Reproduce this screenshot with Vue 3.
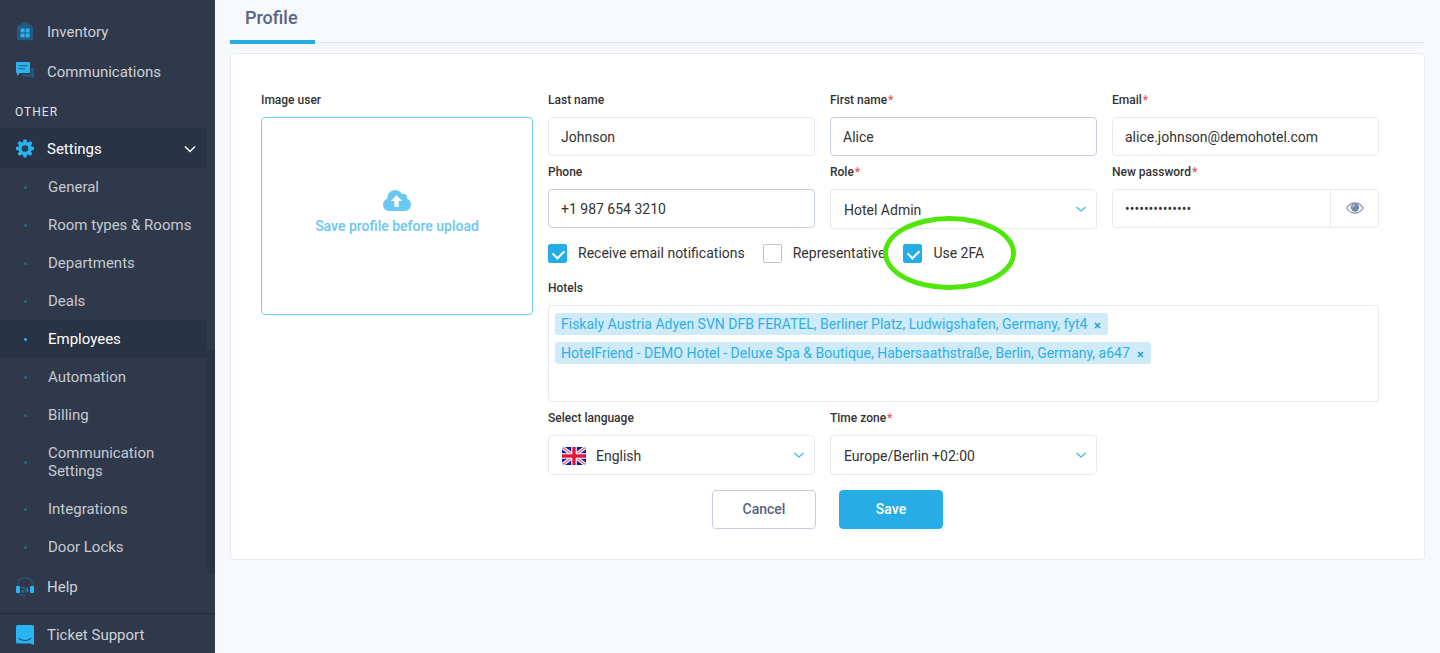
<script setup>
import { ref } from 'vue'

const subItems = [
  'General',
  'Room types & Rooms',
  'Departments',
  'Deals',
  'Employees',
  'Automation',
  'Billing',
  'Communication Settings',
  'Integrations',
  'Door Locks',
]
const current = 'Employees'
const toothAngles = [0, 45, 90, 135]

const lastName = ref('Johnson')
const firstName = ref('Alice')
const email = ref('alice.johnson@demohotel.com')
const phone = ref('+1 987 654 3210')
const password = ref('demo-password1')
const role = ref('Hotel Admin')
const language = ref('English')
const timeZone = ref('Europe/Berlin +02:00')
const notify = ref(true)
const representative = ref(false)
const twoFactor = ref(true)
const showPassword = ref(false)

const hotels = ref([
  'Fiskaly Austria Adyen SVN DFB FERATEL, Berliner Platz, Ludwigshafen, Germany, fyt4',
  'HotelFriend - DEMO Hotel - Deluxe Spa & Boutique, Habersaathstraße, Berlin, Germany, a647',
])
const removeHotel = (index) => hotels.value.splice(index, 1)
</script>

<template>
  <div class="layout">
    <aside class="sidebar">
      <nav class="menu">
        <a href="#" class="item">
          <svg class="icon" viewBox="0 0 20 20" aria-hidden="true">
            <path d="M9.300.300a1.500 1.500 0 0 1 1.400 0l6.500 3.500a1.500 1.500 0 0 1 .8 1.300V17a1.200 1.200 0 0 1-1.200 1.200H3.200A1.200 1.200 0 0 1 2 17V5.100a1.500 1.500 0 0 1 .8-1.300Z" fill="#235b80" />
            <path d="M5.600 6.400h4v4h-4zM10.600 6.400h4v4h-4zM5.600 11.400h4v4h-4zM10.600 11.400h4v4h-4z" fill="#29b3f0" />
          </svg>
          Inventory
        </a>
        <a href="#" class="item">
          <svg class="icon" viewBox="0 0 20 20" aria-hidden="true">
            <path d="M16 6h2.200a.8.800 0 0 1 .8.800V17l-2.500-2.300H8a.8.800 0 0 1-.8-.8v-1.400H16Z" fill="#235b80" />
            <path d="M1.800 0h12.400a.8.800 0 0 1 .8.800v9.400a.8.800 0 0 1-.8.800H5L2 14V11h-.2a.8.800 0 0 1-.8-.8V.800A.8.800 0 0 1 1.800 0Z" fill="#29b3f0" />
            <path d="M3.500 3.700h9M3.500 6.700h6.500" stroke="#1d5b82" stroke-width="1.100" />
          </svg>
          Communications
        </a>
        <h2 class="section">OTHER</h2>
        <a href="#" class="item open">
          <svg class="icon" viewBox="0 0 20 20" aria-hidden="true">
            <circle cx="10" cy="9.500" r="3" fill="#293f56" />
            <circle cx="10" cy="9.500" r="5" fill="none" stroke="#29b3f0" stroke-width="3.400" />
            <path
              v-for="angle in toothAngles"
              :key="angle"
              :transform="`rotate(${angle} 10 9.500)`"
              d="M7.900 3.800 8.500.500h3l.6 3.300zM7.900 15.200l.6 3.300h3l.6-3.300z"
              fill="#29b3f0"
            />
          </svg>
          <span class="grow">Settings</span>
          <svg class="caret" viewBox="0 0 12 8" aria-hidden="true">
            <path d="m1 1.500 5 5 5-5" fill="none" stroke="#fff" stroke-width="1.500" />
          </svg>
        </a>
        <a
          v-for="name in subItems"
          :key="name"
          href="#"
          class="sub"
          :class="{ current: name === current }"
        >
          <span class="dot"></span>
          <span class="sub-name">{{ name }}</span>
        </a>
        <a href="#" class="item lower">
          <svg class="icon" viewBox="0 0 20 20" aria-hidden="true">
            <path d="M2.500 9V8A7.500 7.500 0 0 1 17.500 8v1M3 16c1 2 3.500 2.500 6 2.500" fill="none" stroke="#235b80" stroke-width="1.200" />
            <rect x="1" y="9" width="4" height="7" rx=".8" fill="#29b3f0" />
            <rect x="15" y="9" width="4" height="7" rx=".8" fill="#29b3f0" />
            <circle cx="10" cy="18.300" r="1" fill="#235b80" />
            <path d="M6.500 10.500h2.700v2L6.500 15h3M12.700 15.500v-5l-2.200 3.500h3.500" fill="none" stroke="#2685b5" stroke-width=".9" />
          </svg>
          Help
        </a>
      </nav>
      <div class="scroll-thumb"></div>
      <a href="#" class="item ticket">
        <svg class="icon" viewBox="0 0 20 20" aria-hidden="true">
          <path d="M2.500 0h15A1.500 1.500 0 0 1 19 1.500V20l-3.500-1.500h-13A1.500 1.500 0 0 1 1 17V1.500A1.500 1.500 0 0 1 2.500 0Z" fill="#29b3f0" />
          <path d="M4 13.500c3.500 2.700 8.500 2.700 12 0" fill="none" stroke="#1e577c" stroke-width="1.200" stroke-linecap="round" />
        </svg>
        Ticket Support
      </a>
    </aside>

    <main class="main">
      <div class="tabs">
        <a href="#" class="tab">Profile</a>
      </div>

      <form class="card" @submit.prevent>
        <div class="columns">
          <div class="field">
            <span class="label">Image user</span>
            <button type="button" class="upload">
              <svg class="cloud" viewBox="0 0 28 21" aria-hidden="true">
                <path d="M6.500 21C2.800 21 0 18.200 0 14.700c0-2.800 1.800-5.100 4.200-6C4.200 3.700 7.700 0 12 0c3.100 0 5.800 1.700 7 4.300 3-1.200 5.800 1.200 5 4.400 2.300.700 4 2.900 4 5.800 0 3.700-2.800 6.500-6.300 6.500Z" fill="#6ac7f1" />
                <path d="m13.500 5 5.700 6h-3.500v6h-4.300v-6H8Z" fill="#fff" />
              </svg>
              Save profile before upload
            </button>
          </div>

          <div class="fields">
            <div class="field">
              <label class="label" for="last">Last name</label>
              <input id="last" v-model="lastName" class="control" type="text" />
            </div>
            <div class="field">
              <label class="label" for="first">First name<i>*</i></label>
              <input id="first" v-model="firstName" class="control strong" type="text" />
            </div>
            <div class="field">
              <label class="label" for="email">Email<i>*</i></label>
              <input id="email" v-model="email" class="control" type="email" />
            </div>
            <div class="field">
              <label class="label" for="phone">Phone</label>
              <input id="phone" v-model="phone" class="control strong" type="tel" />
            </div>
            <div class="field">
              <label class="label" for="role">Role<i>*</i></label>
              <div class="select">
                <select id="role" v-model="role" class="control">
                  <option>Hotel Admin</option>
                </select>
                <svg class="arrow" viewBox="0 0 10 6" aria-hidden="true">
                  <path d="m.5 1 4.500 4 4.500-4" fill="none" stroke="#3db4ea" stroke-width="1.300" />
                </svg>
              </div>
            </div>
            <div class="field">
              <label class="label" for="password">New password<i>*</i></label>
              <div class="password">
                <input
                  id="password"
                  v-model="password"
                  class="control"
                  :type="showPassword ? 'text' : 'password'"
                />
                <button
                  type="button"
                  class="eye"
                  aria-label="Show password"
                  @click="showPassword = !showPassword"
                >
                  <svg viewBox="0 0 18 12" aria-hidden="true">
                    <path d="M.7 6C3 2.500 5.800.800 9 .800S15 2.500 17.300 6C15 9.500 12.200 11.200 9 11.200S3 9.500.7 6Z" fill="none" stroke="#8294b3" stroke-width="1.200" />
                    <circle cx="9" cy="5.500" r="4.200" fill="#7388aa" />
                    <path d="M6.700 5.300A2.300 2.300 0 0 1 9 3" fill="none" stroke="#fff" stroke-width=".8" />
                  </svg>
                </button>
              </div>
            </div>

            <div class="checks wide">
              <label class="check"><input v-model="notify" type="checkbox" />Receive email notifications</label>
              <label class="check"><input v-model="representative" type="checkbox" />Representative</label>
              <label class="check">
                <input v-model="twoFactor" type="checkbox" />Use 2FA
                <span class="highlight"></span>
              </label>
            </div>

            <div class="field wide">
              <span class="label">Hotels</span>
              <ul class="tags" aria-label="Hotels">
                <li v-for="(hotel, index) in hotels" :key="hotel" class="tag">
                  {{ hotel }}
                  <button type="button" :aria-label="'Remove ' + hotel" @click="removeHotel(index)">
                    <svg viewBox="0 0 7 7" aria-hidden="true">
                      <path d="m1 1 5 5M6 1 1 6" stroke="#27a3dc" stroke-width="1.700" />
                    </svg>
                  </button>
                </li>
              </ul>
            </div>

            <div class="field">
              <label class="label" for="language">Select language</label>
              <div class="select flagged">
                <select id="language" v-model="language" class="control">
                  <option>English</option>
                </select>
                <svg class="flag" viewBox="0 0 24 18" aria-hidden="true">
                  <clipPath id="flag-shape"><rect width="24" height="18" rx="3" /></clipPath>
                  <g clip-path="url(#flag-shape)">
                    <path d="M0 0h24v18H0z" fill="#0c1c9c" />
                    <path d="m0 0 24 18M24 0 0 18" stroke="#fff" stroke-width="3.600" />
                    <path d="m0 0 24 18M24 0 0 18" stroke="#ee5a76" stroke-width="1.300" />
                    <path d="M12 0v18M0 9h24" stroke="#fff" stroke-width="5.600" />
                    <path d="M12 0v18M0 9h24" stroke="#e3173e" stroke-width="3.400" />
                  </g>
                </svg>
                <svg class="arrow" viewBox="0 0 10 6" aria-hidden="true">
                  <path d="m.5 1 4.500 4 4.500-4" fill="none" stroke="#3db4ea" stroke-width="1.300" />
                </svg>
              </div>
            </div>
            <div class="field">
              <label class="label" for="zone">Time zone<i>*</i></label>
              <div class="select">
                <select id="zone" v-model="timeZone" class="control">
                  <option>Europe/Berlin +02:00</option>
                </select>
                <svg class="arrow" viewBox="0 0 10 6" aria-hidden="true">
                  <path d="m.5 1 4.500 4 4.500-4" fill="none" stroke="#3db4ea" stroke-width="1.300" />
                </svg>
              </div>
            </div>
          </div>
        </div>

        <div class="actions">
          <button type="button" class="btn cancel">Cancel</button>
          <button type="submit" class="btn save">Save</button>
        </div>
      </form>
    </main>
  </div>
</template>

<style>
body {
  background: #f7f8fa;
}
</style>

<style scoped>
.layout,
.layout * {
  box-sizing: border-box;
}
.layout {
  display: flex;
  min-height: 100vh;
  font-family: Roboto, "Liberation Sans", sans-serif;
  font-size: 15px;
  color: #333;
}
.layout button,
.layout input,
.layout select {
  font-family: inherit;
}
a {
  text-decoration: none;
}

.sidebar {
  position: relative;
  display: flex;
  flex-direction: column;
  flex: 0 0 215px;
  background: #2f394b;
}
.menu {
  flex: 1;
  padding: 12px 8px 6px 0;
}
.item {
  display: flex;
  align-items: center;
  height: 40px;
  padding: 0 11px 0 15px;
  color: #ced1d6;
}
.icon {
  flex: none;
  width: 20px;
  height: 20px;
  margin-right: 12px;
}
.open,
.lower,
.ticket {
  padding-top: 2px;
}
.open {
  background: #293346;
  color: #fff;
}
.grow {
  flex: 1;
}
.caret {
  width: 12px;
  height: 8px;
}
.section {
  margin: 0;
  padding: 5px 15px 0;
  font-size: 12px;
  font-weight: 400;
  line-height: 31px;
  letter-spacing: 1px;
  color: #e2e4e8;
}
.sub {
  display: flex;
  align-items: center;
  padding: 10px 12px 10px 24px;
  line-height: 18px;
  color: #c6cad0;
}
.dot {
  flex: none;
  width: 3px;
  height: 3px;
  margin-right: 21px;
  border-radius: 50%;
  background: #23688a;
}
.current {
  background: #293346;
  color: #fff;
}
.current .dot {
  background: #29b3f0;
}
.scroll-thumb {
  position: absolute;
  top: 350px;
  right: 0;
  width: 8px;
  height: 224px;
  border-radius: 4px;
  background: #2a3446;
}
.ticket {
  border-top: 1px solid #222c3c;
}

.main {
  flex: 1;
  min-width: 0;
  padding: 0 15px;
}
.tabs {
  display: flex;
  height: 43px;
  border-bottom: 1px solid #e3e7f1;
}
.tab {
  height: 44px;
  padding: 7px 17px 0 15px;
  border-bottom: 4px solid #27ade5;
  font-size: 18px;
  font-weight: 500;
  line-height: 22px;
  color: #566583;
}
.card {
  margin-top: 10px;
  padding: 38px 45px 30px 30px;
  border: 1px solid #e8ebf3;
  border-radius: 4px;
  background: #fff;
}
.columns {
  display: grid;
  grid-template-columns: 272fr 831fr;
  column-gap: 15px;
}
.fields {
  display: grid;
  grid-template-columns: repeat(3, minmax(0, 1fr));
  gap: 8px 15px;
}
.wide {
  grid-column: 1 / -1;
}
.field {
  min-width: 0;
}
.label {
  display: block;
  margin-bottom: 9px;
  font-size: 12px;
  font-weight: 500;
  line-height: 16px;
  color: #333;
}
.label i {
  padding-left: 1px;
  font-style: normal;
  color: #f64c4c;
}
.control {
  display: block;
  width: 100%;
  height: 39px;
  margin: 0;
  padding: 0 12px;
  border: 1px solid #e5e8f1;
  border-radius: 4px;
  outline: none;
  background: #fff;
  font-size: 14px;
  color: #333;
}
.strong {
  border-color: #c4cde0;
}
.select {
  position: relative;
}
.select .control {
  height: 40px;
  padding: 2px 30px 0 13px;
  appearance: none;
}
.flagged .control {
  padding-left: 47px;
}
.flag {
  position: absolute;
  top: 12px;
  left: 14px;
  width: 24px;
  height: 18px;
}
.arrow {
  position: absolute;
  top: 17px;
  right: 11px;
  width: 10px;
  height: 6px;
}
.password {
  display: flex;
}
.password .control {
  flex: 1;
  min-width: 0;
  border-radius: 4px 0 0 4px;
}
.eye {
  display: flex;
  align-items: center;
  justify-content: center;
  width: 48px;
  padding: 0 0 2px;
  border: 1px solid #e5e8f1;
  border-left: 0;
  border-radius: 0 4px 4px 0;
  background: #fff;
}
.eye svg {
  width: 18px;
  height: 12px;
}
.upload {
  display: flex;
  flex-direction: column;
  align-items: center;
  justify-content: center;
  gap: 6px;
  width: 100%;
  height: 198px;
  padding: 0 0 8px;
  border: 1px solid #75cbf2;
  border-radius: 4px;
  background: #fff;
  font-size: 14px;
  font-weight: 500;
  line-height: 18px;
  color: #6ac7f1;
}
.cloud {
  width: 28px;
  height: 21px;
}

.checks {
  display: flex;
  gap: 18px;
  padding: 7px 0 9px;
}
.check {
  position: relative;
  display: flex;
  align-items: center;
  font-size: 14px;
  line-height: 19px;
}
.check input {
  position: relative;
  appearance: none;
  width: 19px;
  height: 19px;
  margin: 0 11px 0 0;
  border: 1px solid #b9c4dc;
  border-radius: 2px;
  background: #fff;
}
.check input:checked {
  border-color: #27ade5;
  background: #27ade5;
}
.check input:checked::after {
  content: "";
  position: absolute;
  top: 4px;
  left: 4px;
  width: 9px;
  height: 6px;
  border: solid #fff;
  border-width: 0 0 2px 2px;
  transform: rotate(-45deg);
}
.highlight {
  position: absolute;
  top: -28px;
  left: -20px;
  width: 133px;
  height: 74px;
  border: 5px solid #4fe60a;
  border-radius: 50%;
  pointer-events: none;
}

.tags {
  display: flex;
  flex-direction: column;
  align-items: flex-start;
  gap: 7px;
  min-height: 97px;
  margin: 0;
  padding: 7px 6px;
  border: 1px solid #e5e8f1;
  border-radius: 4px;
  list-style: none;
}
.tag {
  display: flex;
  align-items: center;
  gap: 7px;
  padding: 0 7px 0 6px;
  border-radius: 3px;
  background: #cfebf8;
  font-size: 14px;
  line-height: 22px;
  color: #2eafe6;
}
.tag button {
  display: flex;
  padding: 2px 0 0;
  border: 0;
  background: none;
}
.tag svg {
  width: 7px;
  height: 7px;
}

.actions {
  display: flex;
  justify-content: center;
  gap: 23px;
  margin: 15px -15px 0 0;
}
.btn {
  width: 104px;
  height: 39px;
  padding: 0 0 1px;
  border: 1px solid #c4cde0;
  border-radius: 4px;
  background: #fff;
  font-size: 14px;
  font-weight: 500;
  color: #566583;
}
.save {
  border-color: #27ade5;
  background: #27ade5;
  color: #fff;
}
</style>
